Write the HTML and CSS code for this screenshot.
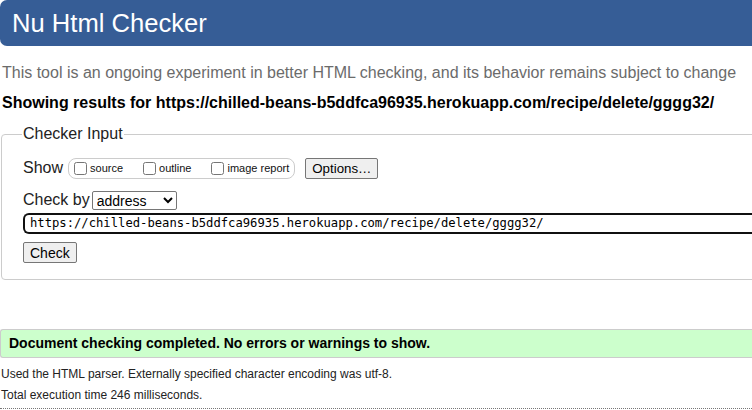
FILE: index.html
```html
<!DOCTYPE html>
<html>
<head>
<meta charset="utf-8">
<link rel="stylesheet" href="styles.css">
</head>
<body>
<h1 class="title">Nu Html Checker</h1>
<p class="intro">This tool is an ongoing experiment in better HTML checking, and its behavior remains subject to change</p>
<p class="showing">Showing results for https://chilled-beans-b5ddfca96935.herokuapp.com/recipe/delete/gggg32/</p>
<fieldset class="checker">
  <legend class="legend">Checker Input</legend>
  <div class="row show-row">
    <span class="label">Show</span>
    <span class="opts">
      <label class="opt opt-source"><input type="checkbox" class="cb">source</label>
      <label class="opt opt-outline"><input type="checkbox" class="cb">outline</label>
      <label class="opt"><input type="checkbox" class="cb">image report</label>
    </span>
    <button class="btn btn-options">Options…</button>
  </div>
  <div class="row by-row">
    <span class="label">Check by</span>
    <select class="sel"><option>address</option></select>
  </div>
  <div class="url">https://chilled-beans-b5ddfca96935.herokuapp.com/recipe/delete/gggg32/</div>
  <button class="btn btn-check">Check</button>
</fieldset>
<p class="success">Document checking completed. No errors or warnings to show.</p>
<p class="details details-first">Used the HTML parser. Externally specified character encoding was utf-8.</p>
<p class="details">Total execution time 246 milliseconds.</p>
<hr class="dotted">
</body>
</html>
```

FILE: styles.css
```css
html, body {
  margin: 0;
  padding: 0;
  overflow: hidden;
  background: #fff;
}
body {
  font-family: "Liberation Sans", Arial, sans-serif;
  color: #000;
  width: 752px;
}
.title {
  margin: 0;
  height: 46px;
  line-height: 46px;
  background: #365d96;
  color: #fff;
  font-size: 25.6px;
  font-weight: normal;
  padding-left: 12px;
  border-radius: 7px 0 0 7px;
}
.intro {
  margin: 17px 0 0 2px;
  font-size: 16px;
  line-height: 19px;
  color: #6b6b6b;
  white-space: nowrap;
}
.showing {
  margin: 11px 0 0 2px;
  font-size: 16px;
  line-height: 19px;
  font-weight: bold;
  white-space: nowrap;
}
.checker {
  margin: 13px -20px 0 1px;
  padding: 14px 0 16px 21px;
  border: 1px solid #cccccc;
  border-radius: 4px;
  min-width: 0;
}
.legend {
  font-size: 16px;
  padding: 0 1px;
  margin-left: -1px;
  color: #222;
}
.row {
  display: flex;
  align-items: center;
}
.label {
  font-size: 16px;
  color: #222;
}
.show-row {
  height: 22px;
}
.opts {
  display: flex;
  align-items: center;
  height: 19px;
  margin-left: 5px;
  padding: 0 5px 0 5px;
  border: 1px solid #cccccc;
  border-radius: 8px;
}
.opt {
  display: flex;
  align-items: center;
  font-size: 11px;
  color: #111;
}
.opt-source { margin-right: 20px; }
.opt-outline { margin-right: 20px; }
.cb {
  width: 13px;
  height: 13px;
  margin: 0 3px 0 0;
}
.btn {
  font-family: "Liberation Sans", Arial, sans-serif;
  font-size: 13px;
  background: #efefef;
  border: 1px solid #767676;
  border-radius: 2px;
  color: #000;
  padding: 1px 6px;
}
.btn-options {
  margin-left: 10px;
  height: 21px;
  padding: 0 6px;
  font-size: 13.3px;
}
.by-row {
  margin-top: 10px;
  height: 22px;
}
.sel {
  margin-left: 2px;
  width: 85px;
  height: 19px;
  font-family: "Liberation Sans", Arial, sans-serif;
  font-size: 14px;
  padding: 0;
  border: 1px solid #767676;
  border-radius: 2px;
  background: #fff;
  color: #000;
}
.url {
  margin-top: 2px;
  height: 17px;
  line-height: 17px;
  border: 2px solid #101010;
  border-right: none;
  border-radius: 6px 0 0 6px;
  padding-left: 5px;
  font-family: "DejaVu Sans Mono", monospace;
  font-size: 12.2px;
  color: #000;
  white-space: nowrap;
}
.btn-check {
  margin-top: 8px;
  height: 21px;
  font-size: 14px;
  padding: 0 6px;
}
.success {
  margin: 49px 0 0 0;
  height: 27px;
  line-height: 27px;
  background: #ccffcc;
  border: 1px solid #cccccc;
  border-right: none;
  border-radius: 3px 0 0 3px;
  padding-left: 8px;
  font-size: 14px;
  font-weight: bold;
  white-space: nowrap;
}
.details {
  margin: 6px 0 0 1px;
  font-size: 12px;
  line-height: 15px;
  color: #222;
  white-space: nowrap;
}
.details-first {
  margin-top: 9px;
}
.dotted {
  margin: 5px 0 0 0;
  border: none;
  border-top: 1px dotted #777;
  height: 0;
}
```
